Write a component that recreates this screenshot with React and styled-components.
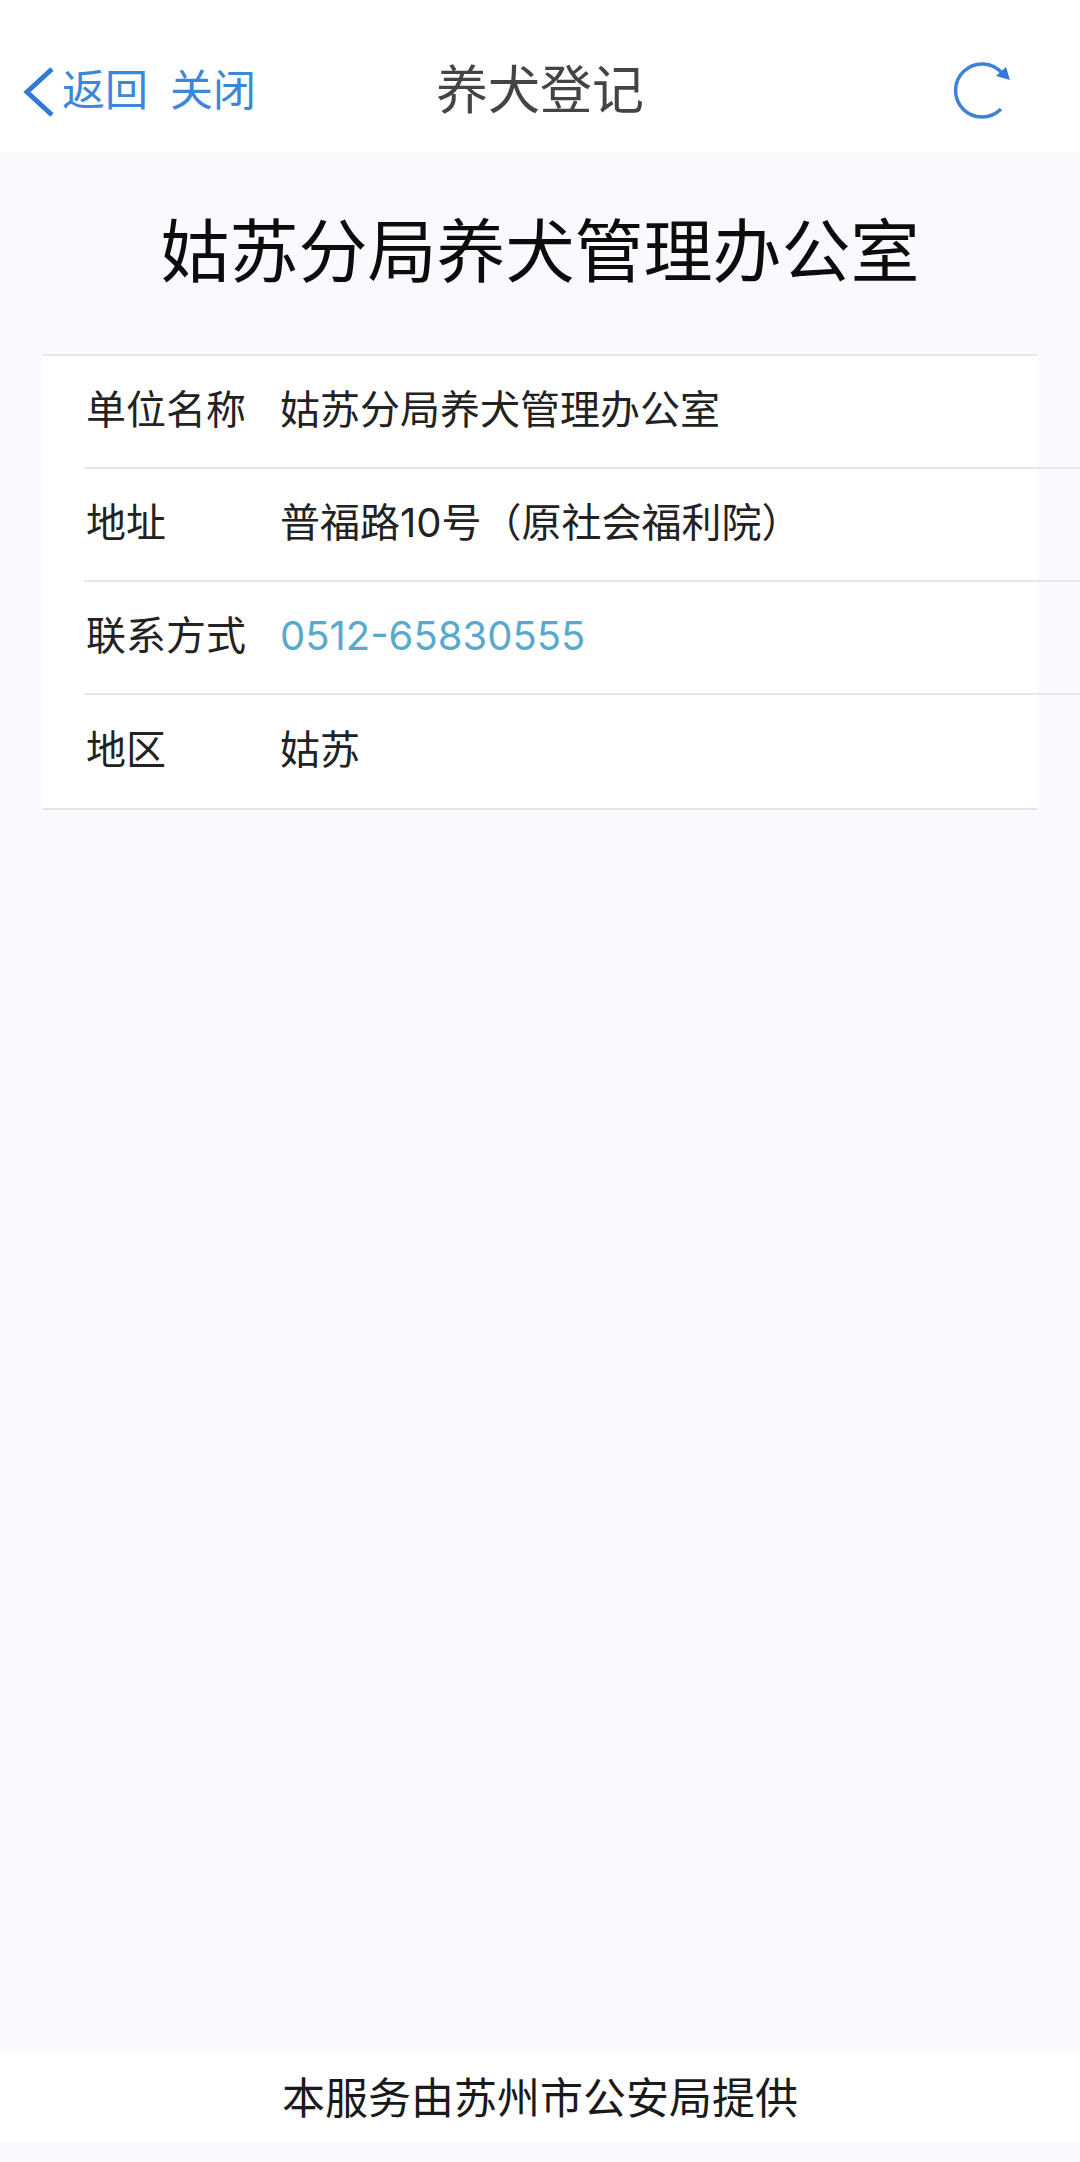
import React from 'react';
import styled, { createGlobalStyle } from 'styled-components';

const rows = [
  { label: '单位名称', value: '姑苏分局养犬管理办公室' },
  { label: '地址', value: '普福路10号（原社会福利院）' },
  { label: '联系方式', value: '0512-65830555', link: true },
  { label: '地区', value: '姑苏' },
];

function App() {
  return (
    <Page>
      <GlobalStyle />
      <NavBar>
        <NavLeft>
          <BackChevron viewBox="0 0 34 52" aria-hidden="true">
            <path d="M30 3 L5 26 L30 49" />
          </BackChevron>
          <NavLink>返回</NavLink>
          <CloseLink>关闭</CloseLink>
        </NavLeft>
        <NavTitle>养犬登记</NavTitle>
        <RefreshIcon viewBox="0 0 64 64" aria-hidden="true">
          <path className="ring" d="M51 51 A26.5 26.5 0 1 1 52 15" />
          <path className="head" d="M56 9 L60 22 L46 18 Z" />
        </RefreshIcon>
      </NavBar>
      <Main>
        <Heading>姑苏分局养犬管理办公室</Heading>
        <InfoCard>
          {rows.map((row) => (
            <InfoRow key={row.label}>
              <Label>{row.label}</Label>
              <Value $link={row.link}>{row.value}</Value>
            </InfoRow>
          ))}
        </InfoCard>
      </Main>
      <Footer>本服务由苏州市公安局提供</Footer>
    </Page>
  );
}

const GlobalStyle = createGlobalStyle`
  body {
    margin: 0;
    background: #faf9fe;
    font-family: "Noto Sans CJK SC", "Noto Sans", sans-serif;
  }
`;

const Page = styled.div`
  display: flex;
  flex-direction: column;
  min-height: 2162px;
  overflow: hidden;
  background: #faf9fe;
`;

const NavBar = styled.header`
  display: flex;
  align-items: center;
  justify-content: space-between;
  position: relative;
  box-sizing: border-box;
  height: 153px;
  padding: 26px 66px 0 22px;
  background: #ffffff;
`;

const NavLeft = styled.div`
  display: flex;
  align-items: center;
`;

const BackChevron = styled.svg`
  width: 34px;
  height: 52px;
  margin-top: 4px;
  margin-right: 6px;
  fill: none;
  stroke: #2f7bd6;
  stroke-width: 5;
`;

const NavLink = styled.span`
  height: 52px;
  font-size: 43px;
  line-height: 46px;
  color: #3c87d8;
`;

const CloseLink = styled(NavLink)`
  margin-left: 22px;
`;

const NavTitle = styled.h1`
  position: absolute;
  left: 0;
  right: 0;
  height: 60px;
  margin: 0;
  text-align: center;
  font-size: 52px;
  font-weight: 400;
  line-height: 54px;
  color: #444444;
`;

const RefreshIcon = styled.svg`
  width: 64px;
  height: 64px;
  .ring {
    fill: none;
    stroke: #3f83d4;
    stroke-width: 3.5;
  }
  .head {
    fill: #3577dc;
  }
`;

const Main = styled.main`
  flex: 1;
  padding: 0 43px;
`;

const Heading = styled.h2`
  margin: 51px -43px 64px;
  text-align: center;
  font-size: 69px;
  font-weight: 400;
  line-height: 86px;
  color: #0c0c0c;
`;

const InfoCard = styled.section`
  background: #ffffff;
  border-top: 2px solid #e8e8ea;
  border-bottom: 2px solid #e4e4e6;
`;

const InfoRow = styled.div`
  display: flex;
  align-items: center;
  box-sizing: border-box;
  height: 113px;
  margin: 0 -43px 0 41px;
  padding: 0 0 4px 2px;
  border-bottom: 2px solid #e8e8ea;

  &:last-child {
    border-bottom: none;
    margin-right: 0;
  }
`;

const Label = styled.span`
  flex: 0 0 194px;
  font-family: Inter, "Noto Sans CJK SC", sans-serif;
  font-size: 40px;
  line-height: 56px;
  color: #222222;
`;

const Value = styled.span`
  font-family: Inter, "Noto Sans CJK SC", sans-serif;
  font-size: 40px;
  line-height: 56px;
  color: ${(props) => (props.$link ? '#59a9ce' : '#222222')};
`;

const Footer = styled.footer`
  height: 90px;
  margin-bottom: 20px;
  background: #ffffff;
  text-align: center;
  font-size: 43px;
  line-height: 86px;
  color: #1a1a1a;
`;

export default App;
